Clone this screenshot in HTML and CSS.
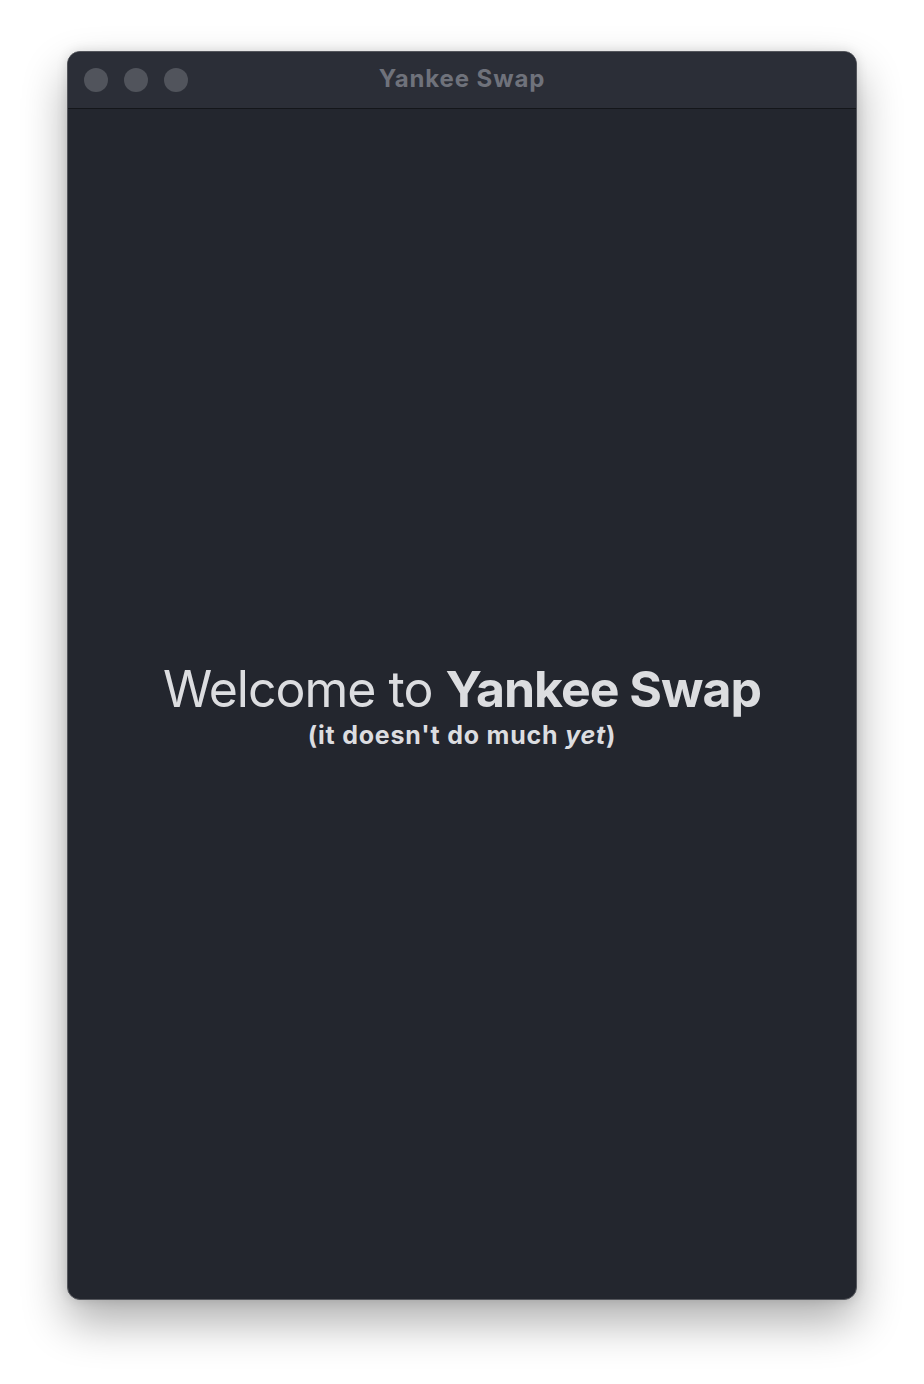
FILE: index.html
```html
<!DOCTYPE html>
<html lang="en">
<head>
<meta charset="utf-8">
<title>Yankee Swap</title>
<link rel="stylesheet" href="styles.css">
</head>
<body>
<div class="stage">
  <div class="window">
    <div class="titlebar">
      <div class="lights">
        <span class="light"></span>
        <span class="light"></span>
        <span class="light"></span>
      </div>
      <div class="title">Yankee Swap</div>
    </div>
    <main class="content">
      <h1 class="headline">Welcome to <strong>Yankee Swap</strong></h1>
      <p class="sub">(it doesn't do much <em>yet</em>)</p>
    </main>
  </div>
</div>
</body>
</html>
```
FILE: styles.css
```css
html, body {
  margin: 0;
  padding: 0;
  background: #ffffff;
}
body {
  font-family: Inter, "Noto Sans", "Liberation Sans", sans-serif;
}
.stage {
  width: 924px;
  height: 1384px;
  padding: 51px 0 0 67px;
  box-sizing: border-box;
}
.window {
  width: 790px;
  height: 1249px;
  box-sizing: border-box;
  border: 1px solid #54565c;
  border-radius: 13px;
  background: #23262e;
  overflow: hidden;
  display: flex;
  flex-direction: column;
  box-shadow: 0 22px 45px rgba(0, 0, 0, 0.32), 0 0 12px rgba(0, 0, 0, 0.12);
}
.titlebar {
  position: relative;
  height: 56px;
  flex: none;
  background: #2b2e37;
  border-bottom: 1px solid #14161a;
  display: flex;
  align-items: center;
  justify-content: center;
}
.lights {
  position: absolute;
  left: 16px;
  top: 16px;
  display: flex;
  gap: 16px;
}
.light {
  width: 24px;
  height: 24px;
  border-radius: 50%;
  background: #51545c;
}
.title {
  font-weight: 700;
  font-size: 24px;
  color: #6f727b;
  letter-spacing: 0.9px;
  margin-top: -3px;
}
.content {
  flex: 1;
  display: flex;
  flex-direction: column;
  align-items: center;
  justify-content: center;
  padding-top: 6px;
  color: #dcdde0;
}
.headline {
  margin: 0;
  font-size: 50px;
  font-weight: 400;
  line-height: 56px;
  letter-spacing: -1px;
}
.headline strong {
  font-weight: 700;
}
.sub {
  margin: 0;
  font-size: 25px;
  font-weight: 700;
  line-height: 36px;
  letter-spacing: 0.8px;
}
.sub em {
  font-style: italic;
}
```
